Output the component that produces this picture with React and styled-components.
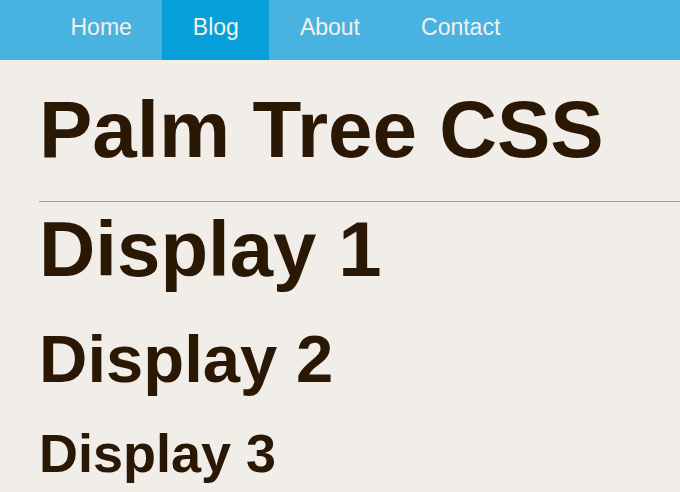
import React from 'react';
import styled, { createGlobalStyle } from 'styled-components';

const GlobalStyle = createGlobalStyle`
  html, body {
    margin: 0;
    padding: 0;
    background: #f1eeea;
    font-family: "Liberation Sans", Arial, sans-serif;
  }
`;

const NavBar = styled.nav`
  background: #48b3e0;
  height: 60px;
  padding-left: 40px;
`;

const NavList = styled.ul`
  display: flex;
  list-style: none;
  margin: 0;
  padding: 0;
  height: 100%;
`;

const NavItem = styled.li`
  box-sizing: border-box;
  height: 60px;
  padding: 14px 30.5px 0;
  font-size: 23px;
  line-height: 1.15;
  color: #f3f0ec;
  background: ${({ $active }) => ($active ? '#069fd9' : 'transparent')};
  cursor: pointer;
`;

const Main = styled.main`
  padding-left: 39px;
  color: #2a1805;
`;

const Title = styled.h1`
  margin: 24px 0 0;
  padding-bottom: 25px;
  border-bottom: 1px solid #a3a09c;
  font-size: 80px;
  font-weight: bold;
  line-height: 1.15;
`;

const Display = styled.h2`
  margin: ${({ $gap }) => $gap}px 0 0;
  font-size: ${({ $size }) => $size}px;
  font-weight: bold;
  line-height: 1.15;
`;

const links = ['Home', 'Blog', 'About', 'Contact'];

export default function App() {
  return (
    <>
      <GlobalStyle />
      <NavBar>
        <NavList>
          {links.map((l) => (
            <NavItem key={l} $active={l === 'Blog'}>
              {l}
            </NavItem>
          ))}
        </NavList>
      </NavBar>
      <Main>
        <Title>Palm Tree CSS</Title>
        <Display $gap={3} $size={78}>Display 1</Display>
        <Display $gap={25} $size={67}>Display 2</Display>
        <Display $gap={25} $size={54}>Display 3</Display>
      </Main>
    </>
  );
}
